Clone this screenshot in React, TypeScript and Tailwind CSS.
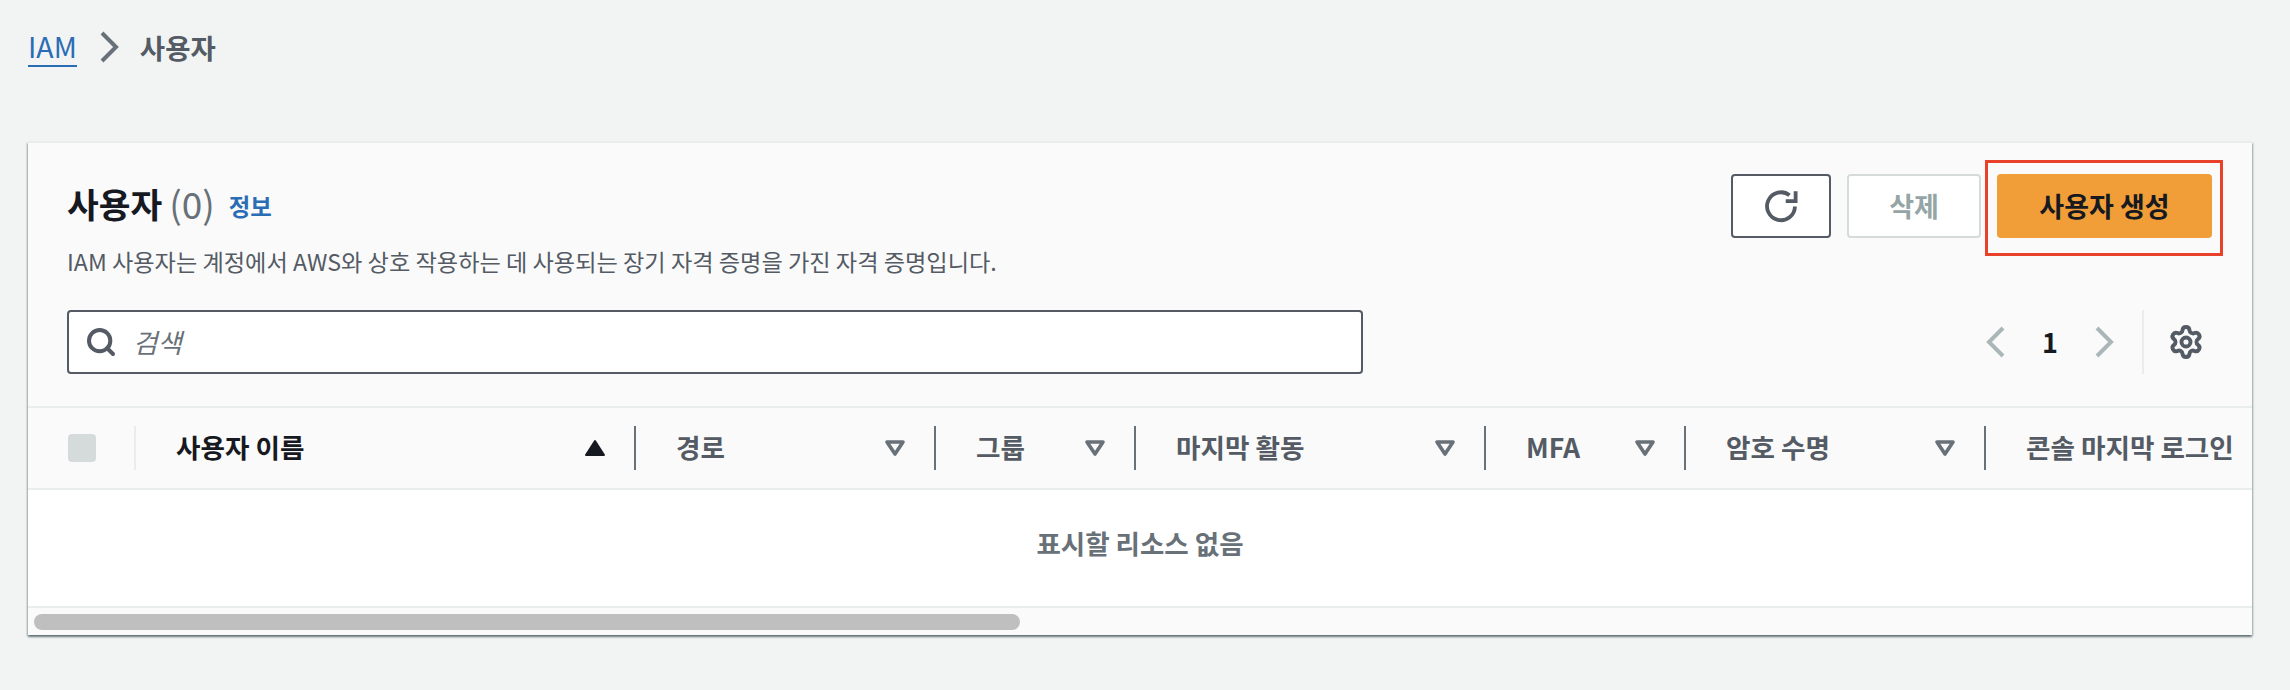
import React from "react";
import { Settings, Search } from "lucide-react";

const columns = [
  { label: "사용자 이름", width: "w-[500px]", sorted: true },
  { label: "경로", width: "w-[300px]" },
  { label: "그룹", width: "w-[200px]" },
  { label: "마지막 활동", width: "w-[350px]" },
  { label: "MFA", width: "w-[200px]" },
  { label: "암호 수명", width: "w-[300px]" },
  { label: "콘솔 마지막 로그인", width: "w-[300px]", last: true },
];

function SortUp() {
  return (
    <svg width="22" height="18" viewBox="0 0 22 18" className="shrink-0">
      <path d="M11 2 L20 16 H2 Z" fill="#16191f" stroke="#16191f" strokeWidth="2" strokeLinejoin="round" />
    </svg>
  );
}

function SortDown() {
  return (
    <svg width="22" height="18" viewBox="0 0 22 18" className="shrink-0">
      <path d="M3 3 H19 L11 15 Z" fill="none" stroke="#687078" strokeWidth="3.6" strokeLinejoin="round" />
    </svg>
  );
}

function Chevron({ dir, color, className }: { dir: "left" | "right"; color: string; className?: string }) {
  return (
    <svg width="20" height="32" viewBox="0 0 20 32" className={className}>
      <path
        d={dir === "right" ? "M3 2 L17 16 L3 30" : "M17 2 L3 16 L17 30"}
        fill="none"
        stroke={color}
        strokeWidth="4"
      />
    </svg>
  );
}

export default function App() {
  return (
    <div className="min-h-[690px] bg-[#f2f3f3] pl-[28px] pr-[38px] pt-[26px] font-['Noto_Sans_CJK_KR','Noto_Sans',sans-serif]">
      <nav className="flex h-[42px] items-center">
        <span className="border-b-2 border-[#2a6db5] text-[28.5px] leading-[38px] text-[#2a6db5]">IAM</span>
        <Chevron dir="right" color="#687078" className="ml-[22px] mr-[21px]" />
        <span className="text-[27.5px] font-bold leading-[38px] text-[#545b64]">사용자</span>
      </nav>

      <section className="mt-[74px] border-t border-[#eaeded] bg-white shadow-[0_2px_2px_0_rgba(0,28,36,0.45),1px_1px_2px_0_rgba(0,28,36,0.2),-1px_1px_2px_0_rgba(0,28,36,0.2)]">
        <header className="border-b-2 border-[#eaeded] bg-[#fafafa] pb-[32px] pl-[39px] pr-[40px] pt-[31px]">
          <div className="flex items-start justify-between">
            <div>
              <div className="flex h-[64px] items-center pb-[5px]">
                <h1 className="text-[34.5px] font-bold leading-none text-[#16191f]">사용자</h1>
                <span className="ml-[7px] text-[37px] leading-none text-[#687078]">(0)</span>
                <a className="ml-[14px] mt-[6px] text-[23.4px] font-bold text-[#2a6db5]">정보</a>
              </div>
              <p className="mt-[5px] text-[23.2px] leading-[36px] text-[#545b64]">
                IAM 사용자는 계정에서 AWS와 상호 작용하는 데 사용되는 장기 자격 증명을 가진 자격 증명입니다.
              </p>
            </div>
            <div className="flex items-center gap-[16px]">
              <button className="flex h-[64px] w-[100px] items-center justify-center rounded-[4px] border-2 border-[#545b64] bg-white">
                <svg width="36" height="36" viewBox="0 0 16 16" fill="none" stroke="#545b64">
                  <path d="M14.2 8.2a6.2 6.2 0 1 1-2.4-5" strokeWidth="1.7" />
                  <path d="M14.5 1.4v4.4h-4.4" strokeWidth="1.7" />
                </svg>
              </button>
              <button className="h-[64px] w-[134px] rounded-[4px] border-2 border-[#d5dbdb] bg-white text-[27px] font-bold text-[#95a5a6]">
                삭제
              </button>
              <div className="relative">
                <button className="h-[64px] w-[215px] rounded-[4px] bg-[#f19e38] text-[27px] font-bold text-[#16191f]">
                  사용자 생성
                </button>
                <div className="absolute bottom-[-18px] left-[-12px] right-[-11px] top-[-14px] border-[3px] border-[#e8412a]" />
              </div>
            </div>
          </div>

          <div className="mt-[31px] flex items-center justify-between">
            <div className="flex h-[64px] w-[1296px] items-center rounded-[4px] border-2 border-[#545b64] bg-white pl-[16px]">
              <Search size={32} color="#545b64" strokeWidth={3} />
              <span className="ml-[16px] text-[26.5px] italic text-[#687078]">검색</span>
            </div>
            <div className="mr-[8px] flex items-center">
              <Chevron dir="left" color="#aab7b8" />
              <span className="ml-[34px] w-[20px] text-center text-[27px] font-bold text-[#16191f]">1</span>
              <Chevron dir="right" color="#aab7b8" className="ml-[34px]" />
              <div className="ml-[28px] h-[64px] w-[2px] bg-[#eaeded]" />
              <Settings size={36} color="#545b64" strokeWidth={2.6} className="ml-[24px]" />
            </div>
          </div>
        </header>

        <div className="flex h-[82px] items-center overflow-hidden border-b-2 border-[#eaeded] bg-[#fafafa]">
          <div className="flex h-[44px] w-[108px] shrink-0 items-center border-r-2 border-[#eaeded] pl-[40px]">
            <div className="h-[28px] w-[28px] rounded-[4px] bg-[#d5dbdb]" />
          </div>
          {columns.map((c) => (
            <div
              key={c.label}
              className={`${c.width} flex h-[44px] shrink-0 items-center justify-between pl-[40px] pr-[28px] ${c.last ? "" : "border-r-2 border-[#687078]"}`}
            >
              <span className={`whitespace-nowrap pb-[2px] text-[26.6px] font-bold ${c.sorted ? "text-[#16191f]" : "text-[#545b64]"}`}>
                {c.label}
              </span>
              {c.last ? null : c.sorted ? <SortUp /> : <SortDown />}
            </div>
          ))}
        </div>

        <div className="flex h-[116px] items-center justify-center bg-white pb-[10px]">
          <span className="text-[26.5px] font-bold text-[#687078]">표시할 리소스 없음</span>
        </div>

        <div className="h-[29px] border-t-2 border-[#eaeded] bg-[#fafafa] pl-[6px] pt-[6px]">
          <div className="h-[16px] w-[986px] rounded-full bg-[#bfbfbf]" />
        </div>
      </section>
    </div>
  );
}
